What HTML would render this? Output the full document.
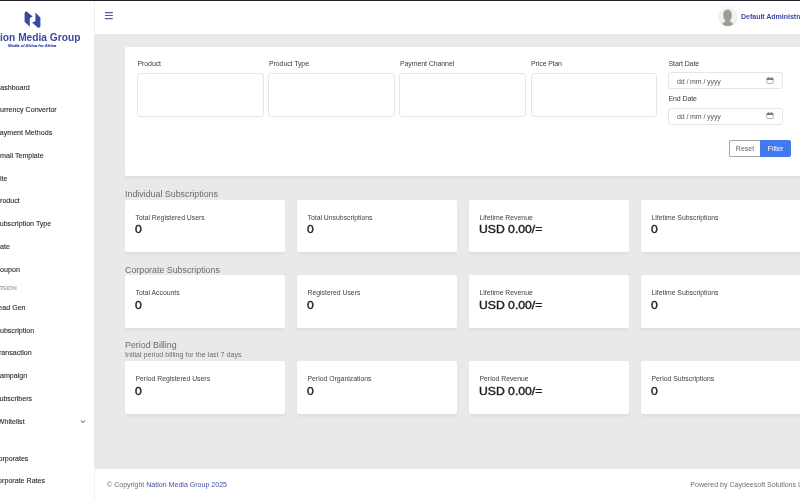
<!DOCTYPE html>
<html><head><meta charset="utf-8">
<style>
*{margin:0;padding:0;box-sizing:border-box}
html,body{width:800px;height:500px;overflow:hidden;background:#fff;font-family:"Liberation Sans",sans-serif}
body{will-change:transform}
.abs{position:absolute;white-space:nowrap}
#topline{position:absolute;left:0;top:0;width:800px;height:1.3px;background:#201f27}
#sidebar{position:absolute;left:0;top:1px;width:94px;height:499px;background:#fff}
#header{position:absolute;left:94px;top:1px;width:706px;height:33px;background:#fff;border-left:1px solid #eceef8}
#main{position:absolute;left:94px;top:34px;width:706px;height:435px;background:#e9e9e9}
#footer{position:absolute;left:94px;top:469px;width:706px;height:31px;background:#fff;border-left:1px solid #f0f1f8}
.card{position:absolute;background:#fff;border-radius:2px;box-shadow:0 3px 2px rgba(40,50,100,.04)}
.lbl{position:absolute;font-size:7px;letter-spacing:-0.1px;color:#3d3d3d;white-space:nowrap}
.box{position:absolute;border:1px solid #e4e6e9;border-radius:3px;background:#fff}
.sec{position:absolute;font-size:8.85px;color:#686b70;white-space:nowrap}
.st{position:absolute;font-size:6.85px;color:#424242;white-space:nowrap}
.sv{position:absolute;font-size:12.2px;line-height:14px;color:#1f1f1f;white-space:nowrap;-webkit-text-stroke:0.45px #1f1f1f;transform:scaleY(0.88);transform-origin:0 11.2px}
.nav{position:absolute;font-size:7.1px;line-height:7.1px;color:#2a2a2a;white-space:nowrap;-webkit-text-stroke:0.1px #2a2a2a}
</style></head><body>
<div id="sidebar"></div>
<div id="header"></div>
<div id="main"></div>
<div id="footer"></div>
<div id="topline"></div>

<!-- logo -->
<svg class="abs" style="left:0;top:0" width="95" height="50" viewBox="0 0 95 50">
<path d="M24.6 12.8 Q25 11.6 26.7 11.6 L32.7 16.5 L30.6 17.4 L29.8 18.3 L29.8 26.7 L24.6 21.7 Z" fill="#3a4a9f"/>
<path d="M35.4 12.6 L40.4 17.4 L40.4 26.2 Q40 27.7 38 27.7 L32 22.4 L34.4 21.7 L35.4 21 Z" fill="#3a4a9f"/>
</svg>
<div class="abs" style="left:-16.4px;top:32.4px;font-size:10.2px;font-weight:bold;color:#3a4a9f;line-height:12px">Nation Media Group</div>
<div class="abs" style="left:8px;top:43px;font-size:4.1px;font-weight:bold;font-style:italic;color:#3a4a9f;line-height:5px;-webkit-text-stroke:0.12px #3a4a9f">Media of Africa for Africa</div>

<!-- nav -->
<div class="nav" style="left:-4.9px;top:84.59px">Dashboard</div>
<div class="nav" style="left:-5.2px;top:107.39px">Currency Convertor</div>
<div class="nav" style="left:-5.0px;top:130.29px">Payment Methods</div>
<div class="nav" style="left:-4.7px;top:152.99px">Email Template</div>
<div class="nav" style="left:-4.7px;top:175.59px">Site</div>
<div class="nav" style="left:-4.7px;top:198.39px">Product</div>
<div class="nav" style="left:-5.0px;top:221.39px">Subscription Type</div>
<div class="nav" style="left:-5.0px;top:243.99px">Rate</div>
<div class="nav" style="left:-5.0px;top:267.19px">Coupon</div>
<div class="nav" style="left:-5.6px;top:304.79px">Lead Gen</div>
<div class="nav" style="left:-4.8px;top:327.89px">Subscription</div>
<div class="nav" style="left:-5.2px;top:350.49px">Transaction</div>
<div class="nav" style="left:-5.2px;top:373.09px">Campaign</div>
<div class="nav" style="left:-5.3px;top:395.69px">Subscribers</div>
<div class="nav" style="left:-2.2px;top:418.59px">Whitelist</div>
<div class="nav" style="left:-6.7px;top:455.59px">Corporates</div>
<div class="nav" style="left:-7.0px;top:477.79px">Corporate Rates</div>
<div class="nav" style="left:-21.6px;top:286.37px;font-size:5.7px;line-height:5.7px;color:#bfc2c7">CONVERSION</div>
<svg class="abs" style="left:80px;top:418.8px" width="6" height="5" viewBox="0 0 6 5"><path d="M1.1 1.8 L3 3.6 L4.9 1.8" fill="none" stroke="#555" stroke-width="1" stroke-linecap="round"/></svg>

<!-- header -->
<svg class="abs" style="left:104px;top:11px" width="10" height="9" viewBox="0 0 10 9">
<rect x="0.8" y="1.1" width="8.2" height="1.2" rx=".6" fill="#545aa6"/>
<rect x="0.8" y="3.9" width="8.2" height="1.2" rx=".6" fill="#545aa6"/>
<rect x="0.8" y="7" width="8.2" height="1.2" rx=".6" fill="#545aa6"/>
</svg>
<svg class="abs" style="left:717.7px;top:7.3px" width="20" height="20" viewBox="0 0 20 20">
<defs><clipPath id="av"><circle cx="9.9" cy="9.9" r="9.2"/></clipPath></defs>
<circle cx="9.9" cy="9.9" r="9.9" fill="#f2f2f2"/>
<path clip-path="url(#av)" d="M9.5 2.7 C12.6 2.7 13.8 5 13.8 8 C13.8 11 12.8 12.6 11.8 13.6 C12.3 15.1 14.3 16.1 15.8 17.1 Q12.5 19.3 9.5 19.3 Q6.5 19.3 3.6 17.1 C5 16.1 7 15.1 7.4 13.6 C6.3 12.6 5.3 11 5.3 8 C5.3 5 6.5 2.7 9.5 2.7 Z" fill="#9d9d95"/>
</svg>
<div class="abs" style="left:741px;top:13.1px;font-size:7.1px;letter-spacing:-0.06px;font-weight:bold;color:#3f4ba2">Default Administrator</div>

<!-- filter card -->
<div class="card" style="left:125px;top:46.5px;width:690px;height:129.6px"></div>
<div class="lbl" style="left:137.5px;top:59.7px">Product</div>
<div class="lbl" style="left:269px;top:59.7px">Product Type</div>
<div class="lbl" style="left:400px;top:59.7px">Payment Channel</div>
<div class="lbl" style="left:531px;top:59.7px">Price Plan</div>
<div class="box" style="left:137px;top:72.6px;width:126.5px;height:44.9px"></div>
<div class="box" style="left:268px;top:72.6px;width:126.5px;height:44.9px"></div>
<div class="box" style="left:399.2px;top:72.6px;width:126.5px;height:44.9px"></div>
<div class="box" style="left:530.8px;top:72.6px;width:126.5px;height:44.9px"></div>
<div class="lbl" style="left:668.5px;top:59.7px">Start Date</div>
<div class="box" style="left:668.2px;top:72.3px;width:114.8px;height:17.2px"></div>
<div class="lbl" style="left:677px;top:77.9px;color:#555">dd / mm / yyyy</div>
<div class="lbl" style="left:668.5px;top:94.7px">End Date</div>
<div class="box" style="left:668.2px;top:107.5px;width:114.8px;height:17.2px"></div>
<div class="lbl" style="left:677px;top:112.9px;color:#555">dd / mm / yyyy</div>
<svg class="abs" style="left:766px;top:76px" width="8" height="9" viewBox="0 0 8 9"><rect x=".75" y="2.2" width="6.5" height="5.3" rx=".9" fill="none" stroke="#999" stroke-width=".75"/><rect x=".6" y="2" width="6.8" height="1.9" rx=".6" fill="#7d7d7d"/><rect x="2.2" y="1" width=".75" height="1.5" fill="#7d7d7d"/><rect x="5.05" y="1" width=".75" height="1.5" fill="#7d7d7d"/></svg>
<svg class="abs" style="left:766px;top:111.2px" width="8" height="9" viewBox="0 0 8 9"><rect x=".75" y="2.2" width="6.5" height="5.3" rx=".9" fill="none" stroke="#999" stroke-width=".75"/><rect x=".6" y="2" width="6.8" height="1.9" rx=".6" fill="#7d7d7d"/><rect x="2.2" y="1" width=".75" height="1.5" fill="#7d7d7d"/><rect x="5.05" y="1" width=".75" height="1.5" fill="#7d7d7d"/></svg>
<div class="abs" style="left:728.5px;top:140px;width:32px;height:16.5px;border:1px solid #a3a7ab;border-right:none;border-radius:2px 0 0 2px;background:#fff;font-size:7px;color:#666;text-align:center;line-height:16.5px">Reset</div>
<div class="abs" style="left:760px;top:140px;width:31px;height:16.5px;background:#4379ef;border-radius:0 2px 2px 0;font-size:7.1px;color:#fff;text-align:center;line-height:18.2px">Filter</div>

<!-- sections -->
<div class="sec" style="left:125px;top:189px">Individual Subscriptions</div>
<div class="card" style="left:125px;top:199.7px;width:159.5px;height:52.4px"></div>
<div class="card" style="left:297px;top:199.7px;width:159.5px;height:52.4px"></div>
<div class="card" style="left:469px;top:199.7px;width:159.5px;height:52.4px"></div>
<div class="card" style="left:641px;top:199.7px;width:159.5px;height:52.4px"></div>
<div class="st" style="left:135.5px;top:213.5px">Total Registered Users</div>
<div class="st" style="left:307.5px;top:213.5px">Total Unsubscriptions</div>
<div class="st" style="left:479.5px;top:213.5px">Lifetime Revenue</div>
<div class="st" style="left:651.5px;top:213.5px">Lifetime Subscriptions</div>
<div class="sv" style="left:135px;top:222px">0</div>
<div class="sv" style="left:307px;top:222px">0</div>
<div class="sv" style="left:479px;top:222px">USD 0.00/=</div>
<div class="sv" style="left:651px;top:222px">0</div>

<div class="sec" style="left:125px;top:265px">Corporate Subscriptions</div>
<div class="card" style="left:125px;top:275.4px;width:159.5px;height:52.4px"></div>
<div class="card" style="left:297px;top:275.4px;width:159.5px;height:52.4px"></div>
<div class="card" style="left:469px;top:275.4px;width:159.5px;height:52.4px"></div>
<div class="card" style="left:641px;top:275.4px;width:159.5px;height:52.4px"></div>
<div class="st" style="left:135.5px;top:289.0px">Total Accounts</div>
<div class="st" style="left:307.5px;top:289.0px">Registered Users</div>
<div class="st" style="left:479.5px;top:289.0px">Lifetime Revenue</div>
<div class="st" style="left:651.5px;top:289.0px">Lifetime Subscriptions</div>
<div class="sv" style="left:135px;top:298px">0</div>
<div class="sv" style="left:307px;top:298px">0</div>
<div class="sv" style="left:479px;top:298px">USD 0.00/=</div>
<div class="sv" style="left:651px;top:298px">0</div>

<div class="sec" style="left:125px;top:340px">Period Billing</div>
<div class="abs" style="left:125px;top:351.3px;font-size:7px;letter-spacing:0.04px;color:#6b6e73">Initial period billing for the last 7 days</div>
<div class="card" style="left:125px;top:361.3px;width:159.5px;height:52.4px"></div>
<div class="card" style="left:297px;top:361.3px;width:159.5px;height:52.4px"></div>
<div class="card" style="left:469px;top:361.3px;width:159.5px;height:52.4px"></div>
<div class="card" style="left:641px;top:361.3px;width:159.5px;height:52.4px"></div>
<div class="st" style="left:135.5px;top:375.0px">Period Registered Users</div>
<div class="st" style="left:307.5px;top:375.0px">Period Organizations</div>
<div class="st" style="left:479.5px;top:375.0px">Period Revenue</div>
<div class="st" style="left:651.5px;top:375.0px">Period Subscriptions</div>
<div class="sv" style="left:135px;top:384px">0</div>
<div class="sv" style="left:307px;top:384px">0</div>
<div class="sv" style="left:479px;top:384px">USD 0.00/=</div>
<div class="sv" style="left:651px;top:384px">0</div>

<!-- footer -->
<div class="abs" style="left:107px;top:481.4px;font-size:7.05px;color:#6b6e73">© Copyright <span style="color:#4352a3">Nation Media Group 2025</span></div>
<div class="abs" style="left:690.3px;top:481.4px;font-size:7.05px;color:#6b6e73">Powered by Caydeesoft Solutions Ltd</div>
</body></html>
